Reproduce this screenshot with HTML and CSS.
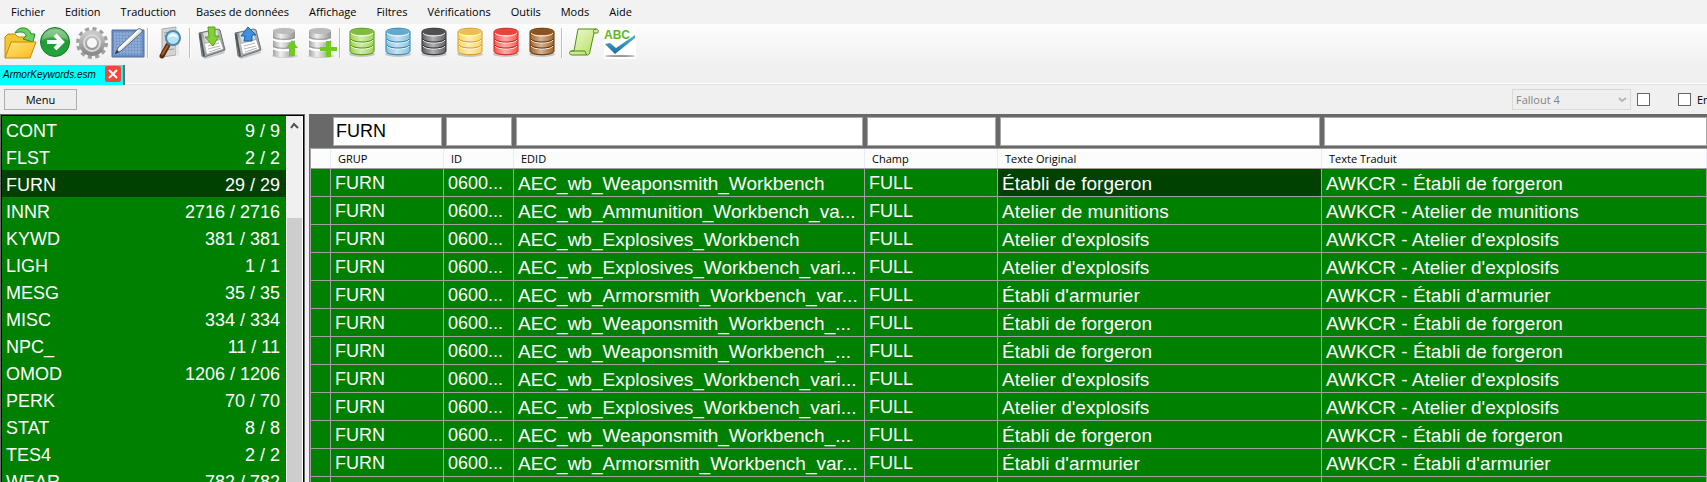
FILE: index.html
```html
<!DOCTYPE html>
<html lang="fr">
  <head>
    <meta charset="UTF-8" />
    <meta name="viewport" content="width=device-width, initial-scale=1.0" />
    <title>ArmorKeywords.esm</title>
    <link rel="stylesheet" href="styles.css">
  </head>
  <body>
    <nav class="menubar">
      <button type="button">Fichier</button>
      <button type="button">Edition</button>
      <button type="button">Traduction</button>
      <button type="button">Bases de données</button>
      <button type="button">Affichage</button>
      <button type="button">Filtres</button>
      <button type="button">Vérifications</button>
      <button type="button">Outils</button>
      <button type="button">Mods</button>
      <button type="button">Aide</button>
    </nav>

    <!-- shared gradients and the database cylinder -->
    <svg class="defs" aria-hidden="true">
      <defs>
        <linearGradient id="folder" x1="0" y1="0" x2="1" y2="1">
          <stop offset="0" stop-color="#ffe680" /><stop offset="1" stop-color="#fbb917" />
        </linearGradient>
        <linearGradient id="go" x1="0" y1="0" x2="0" y2="1">
          <stop offset="0" stop-color="#7cc47c" /><stop offset=".5" stop-color="#219a35" /><stop offset="1" stop-color="#1fa83a" />
        </linearGradient>
        <linearGradient id="metal" x1="0" y1="0" x2="0" y2="1">
          <stop offset="0" stop-color="#c8c8c8" /><stop offset="1" stop-color="#8c8c8c" />
        </linearGradient>
        <linearGradient id="silver" x1="0" y1="0" x2="1" y2="0">
          <stop offset="0" stop-color="#a4a4a4" /><stop offset=".35" stop-color="#f0f0f0" /><stop offset="1" stop-color="#949494" />
        </linearGradient>
        <linearGradient id="disk" x1="0" y1="0" x2="1" y2="1">
          <stop offset="0" stop-color="#6c7072" /><stop offset=".3" stop-color="#c0c3c5" /><stop offset="1" stop-color="#85898b" />
        </linearGradient>
        <linearGradient id="leaf" x1="0" y1="0" x2="1" y2="1">
          <stop offset="0" stop-color="#f0fbd8" /><stop offset="1" stop-color="#b4dc5c" />
        </linearGradient>
        <linearGradient id="tick" x1="0" y1="0" x2="0" y2="1">
          <stop offset="0" stop-color="#58b4dc" /><stop offset="1" stop-color="#1c6c9c" />
        </linearGradient>
        <linearGradient id="shine" x1="0" y1="0" x2="1" y2="0">
          <stop offset="0" stop-color="#fff" stop-opacity="0" /><stop offset=".45" stop-color="#fff" stop-opacity=".5" /><stop offset="1" stop-color="#fff" stop-opacity="0" />
        </linearGradient>
      </defs>
      <symbol id="db" viewBox="0 0 32 32">
        <ellipse cx="17" cy="27" rx="13" ry="3" fill="#000" opacity=".18" />
        <path d="M5 5c0-5 24-5 24 0v19c0 5-24 5-24 0z" fill="currentColor" />
        <path d="M6 8h22v16c0 4-22 4-22 0z" fill="url(#shine)" />
        <path d="M5 5c0-5 24-5 24 0v19c0 5-24 5-24 0z" fill="none" stroke="var(--edge)" />
        <ellipse cx="17" cy="5" rx="11" ry="3" fill="var(--edge)" opacity=".4" />
        <path d="M6 6c2 4 20 4 22 0M6 13c2 4 20 4 22 0M6 19c2 4 20 4 22 0" fill="none" stroke="#fff" opacity=".85" />
        <path d="M6 12c2 4 20 4 22 0M6 18c2 4 20 4 22 0" fill="none" stroke="var(--edge)" />
      </symbol>
      <symbol id="silver-db" viewBox="0 0 32 32">
        <ellipse cx="18" cy="29" rx="13" ry="2" fill="#000" opacity=".15" />
        <path d="M6 4c0-4 22-4 22 0v24c0 3-22 3-22 0z" fill="url(#silver)" />
        <ellipse cx="17" cy="4" rx="11" ry="3" fill="#bcbcbc" />
        <path d="M6 12c3 3 19 3 22 0M6 21c3 3 19 3 22 0" fill="none" stroke="#fff" stroke-width="2" />
        <path d="M6 10c3 3 19 3 22 0M6 19c3 3 19 3 22 0" fill="none" stroke="#929292" />
      </symbol>
      <symbol id="floppy" viewBox="0 0 32 32">
        <path d="M8 30l21-6 1 2-20 6z" fill="#000" opacity=".18" />
        <path d="M4 6l19-4 2 1 5 20-21 7-2-1z" fill="url(#disk)" stroke="#6d7173" />
        <path d="M5 7l4 22" stroke="#515557" stroke-width="2" />
        <path d="M8 6l14-3 2 9-13 3z" fill="#dcdfe1" />
        <path d="M10 17l15-4 3 9-16 5z" fill="#fff" />
        <path d="M13 19l11-3M13 22l12-3M14 25l12-4" stroke="#b4b4b4" />
      </symbol>
    </svg>

    <div class="toolbar">
      <button type="button" aria-label="Ouvrir">
        <svg viewBox="0 0 32 32">
          <path d="M2 30V10l3-3h7l3 3h12v18z" fill="#f6c632" stroke="#c58a00" />
          <path d="M12 6C15-1 26-1 28 7h4l-2 8-10-3 3-3c0-4-6-5-11-3z" fill="#6fce62" stroke="#258a31" />
          <path d="M8 15h25l-6 16H2z" fill="url(#folder)" stroke="#c58a00" />
        </svg>
      </button>
      <button type="button" aria-label="Lancer">
        <svg viewBox="0 0 32 32">
          <circle cx="16" cy="15" r="14.500" fill="url(#go)" stroke="#157a28" />
          <path d="M3 13C4-1 28-1 29 13c-8-4-18-4-26 0z" fill="#fff" opacity=".25" />
          <path d="M8 15h14M16 8l7 7-7 7" fill="none" stroke="#fff" stroke-width="4" />
        </svg>
      </button>
      <button type="button" aria-label="Options">
        <svg viewBox="0 0 32 32">
          <circle cx="17" cy="16" r="14" fill="none" stroke="#a0a0a0" stroke-width="4" stroke-dasharray="4 3.330" />
          <circle cx="17" cy="16" r="9" fill="none" stroke="url(#metal)" stroke-width="8" />
          <circle cx="17" cy="16" r="8" fill="none" stroke="#d8d8d8" stroke-width="2" />
        </svg>
      </button>
      <button type="button" aria-label="Dessin">
        <svg viewBox="0 0 32 32">
          <path d="M1 3h32v27H1z" fill="#6a8dc2" />
          <path d="M4 5v23M7 5v23M10 5v23M13 5v23M16 5v23M19 5v23M22 5v23M25 5v23M28 5v23M3 7h28M3 10h28M3 13h28M3 16h28M3 19h28M3 22h28M3 25h28" stroke="#98b4dc" fill="none" />
          <path d="M1 3h32v27H1z" fill="none" stroke="#4c6ea4" />
          <path d="M4 27l3-6L27 2c2-1 5 1 4 3L10 24z" fill="#dfe6ea" stroke="#53646e" />
          <path d="M8 22L28 3" stroke="#fff" stroke-width="2" />
          <path d="M4 27l2-4 2 2z" fill="#234" />
        </svg>
      </button>
      <span class="separator"></span>
      <button type="button" aria-label="Rechercher">
        <svg viewBox="0 0 32 32">
          <path d="M9 2l14-2v28l-14 2z" fill="#d2d4d6" stroke="#a9abad" />
          <path d="M23 1l3 3v25l-3-1z" fill="#e6e7e8" />
          <path d="M11 6l8-1M11 9l8-1M11 23l10-1" stroke="#999" />
          <path d="M15 18l-6 11" stroke="#5b2d10" stroke-width="5" stroke-linecap="round" />
          <path d="M15 18l-6 10" stroke="#a86030" stroke-width="2" />
          <circle cx="20" cy="11" r="7" fill="#b8e2f8" stroke="#4e87ab" stroke-width="2" />
          <path d="M15 11c1-6 9-6 10 0-3-2-7-2-10 0z" fill="#fff" opacity=".8" />
        </svg>
      </button>
      <span class="separator"></span>
      <button type="button" aria-label="Importer">
        <svg viewBox="0 0 32 32">
          <use href="#floppy" />
          <path d="M13 0h7v9h4l-6 10-8-9h4z" fill="#84cf35" stroke="#56a018" />
        </svg>
      </button>
      <button type="button" aria-label="Exporter">
        <svg viewBox="0 0 32 32">
          <use href="#floppy" />
          <path d="M13 14h8V8h4l-8-8-7 9h4z" fill="#3e91e0" stroke="#1761ad" />
        </svg>
      </button>
      <button type="button" aria-label="Charger la base">
        <svg viewBox="0 0 32 32">
          <use href="#silver-db" />
          <path d="M22 29V21h-3l6-8 6 8h-3v8z" fill="#6fcb21" />
        </svg>
      </button>
      <button type="button" aria-label="Ajouter à la base">
        <svg viewBox="0 0 32 32">
          <use href="#silver-db" />
          <path d="M23 14h5v6h6v4h-6v6h-5v-6h-6v-4h6z" fill="#6fcb21" />
        </svg>
      </button>
      <span class="separator"></span>
      <button type="button" class="db-green" aria-label="Base verte"><svg><use href="#db" /></svg></button>
      <button type="button" class="db-blue" aria-label="Base bleue"><svg><use href="#db" /></svg></button>
      <button type="button" class="db-black" aria-label="Base noire"><svg><use href="#db" /></svg></button>
      <button type="button" class="db-yellow" aria-label="Base jaune"><svg><use href="#db" /></svg></button>
      <button type="button" class="db-red" aria-label="Base rouge"><svg><use href="#db" /></svg></button>
      <button type="button" class="db-brown" aria-label="Base marron"><svg><use href="#db" /></svg></button>
      <span class="separator"></span>
      <button type="button" aria-label="Script">
        <svg viewBox="0 0 32 32">
          <path d="M11 2h18c3 0 3 4 1 4h-3l-4 18c0 4-2 4-4 4H5c-3 0-3-4-1-4h3z" fill="url(#leaf)" stroke="#4c8c10" />
          <path d="M27 6c-1-1-1-4 2-4M4 24h14c1 0 0 3 2 4" fill="none" stroke="#4c8c10" />
        </svg>
      </button>
      <button type="button" aria-label="Orthographe">
        <svg viewBox="0 0 32 32">
          <path d="M1 0h32v32H1z" fill="#fff" />
          <ellipse cx="17" cy="29" rx="15" ry="1" fill="#999" />
          <text x="1" y="12" class="abc">ABC</text>
          <path d="M2 17l5-1 6 5L32 8v3L12 27z" fill="url(#tick)" />
        </svg>
      </button>
    </div>

    <div class="tabs">
      <div class="tab">
        <span>ArmorKeywords.esm</span>
        <button type="button" aria-label="Fermer">
          <svg viewBox="0 0 16 16"><path d="M4 4l8 8M12 4l-8 8" stroke="#fff" stroke-width="2" /></svg>
        </button>
      </div>
    </div>

    <div class="options">
      <button type="button" class="menu-button">Menu</button>
      <div class="game">
        <select aria-label="Jeu" disabled>
          <option>Fallout 4</option>
        </select>
        <svg viewBox="0 0 9 8"><path d="M1 2l3 3 4-3" fill="none" stroke="#b4b4b4" stroke-width="2" /></svg>
      </div>
      <input type="checkbox" class="check-game" aria-label="Activer le jeu" />
      <label class="check-label"><input type="checkbox" /><span>En</span></label>
    </div>

    <main>
      <aside class="groups">
        <ul id="groups"></ul>
        <div class="scrollbar">
          <svg viewBox="0 0 9 7"><path d="M1 6l3-4 4 4" fill="none" stroke="#505050" stroke-width="2" /></svg>
          <div class="thumb"></div>
        </div>
      </aside>

      <section class="strings">
        <table>
          <colgroup>
            <col class="col-mark" />
            <col class="col-grup" />
            <col class="col-id" />
            <col class="col-edid" />
            <col class="col-champ" />
            <col class="col-original" />
            <col />
          </colgroup>
          <thead>
            <tr class="filters">
              <td></td>
              <td><input type="text" value="FURN" aria-label="Filtre GRUP" /></td>
              <td><input type="text" aria-label="Filtre ID" /></td>
              <td><input type="text" aria-label="Filtre EDID" /></td>
              <td><input type="text" aria-label="Filtre Champ" /></td>
              <td><input type="text" aria-label="Filtre Texte Original" /></td>
              <td><input type="text" aria-label="Filtre Texte Traduit" /></td>
            </tr>
            <tr class="titles">
              <th></th>
              <th>GRUP</th>
              <th>ID</th>
              <th>EDID</th>
              <th>Champ</th>
              <th>Texte Original</th>
              <th>Texte Traduit</th>
            </tr>
          </thead>
          <tbody id="rows"></tbody>
        </table>
      </section>
    </main>

    <script src="script.js"></script>
  </body>
</html>
```
FILE: styles.css
```css
* {
  box-sizing: border-box;
}
body {
  display: flex;
  flex-direction: column;
  height: 100vh;
  margin: 0;
  overflow: hidden;
  background: #f0f0f0;
  color: #000;
  font-family: "Open Sans", sans-serif;
  font-size: 11px;
}
button {
  padding: 0;
  border: none;
  background: none;
  color: inherit;
  font: inherit;
}
.defs {
  position: absolute;
  width: 0;
  height: 0;
}

/* menu bar */
.menubar {
  display: flex;
  flex: none;
  gap: 20px;
  height: 24px;
  padding: 0 0 2px 11px;
  background: #f2f2f2;
}

/* icon bar */
.toolbar {
  display: flex;
  flex: none;
  align-items: center;
  gap: 4px;
  height: 41px;
  padding: 0 3px 3px;
  background: linear-gradient(#fdfdfd, #f0f0f0);
}
.toolbar button,
.toolbar svg {
  display: block;
  width: 32px;
  height: 32px;
  overflow: visible;
}
.separator {
  width: 2px;
  height: 30px;
  border-left: 1px solid #bdbdbd;
  border-right: 1px solid #fff;
}
.db-green { color: #a4d65a; --edge: #4c9413; }
.db-blue { color: #8cc4e2; --edge: #2a80b4; }
.db-black { color: #66666a; --edge: #2c2c2e; }
.db-yellow { color: #ffd766; --edge: #d29a2c; }
.db-red { color: #ff5c50; --edge: #c8201c; }
.db-brown { color: #a8682c; --edge: #5c3408; }
.abc {
  fill: #62b81c;
  font: bold 12px "Liberation Sans", sans-serif;
}

/* file tabs */
.tabs {
  display: flex;
  flex: none;
  height: 20px;
  box-shadow: inset 0 -1px #e3e3e3, inset 0 -2px #fff;
}
.tab {
  display: flex;
  align-items: center;
  width: 125px;
  padding: 0 2px 2px 3px;
  border-right: 2px solid #696969;
  background: #0ff;
  font: italic 10px "Liberation Sans", Arial, sans-serif;
}
.tab span {
  flex: 1;
}
.tab button,
.tab svg {
  display: block;
  width: 16px;
  height: 16px;
}
.tab button {
  border-radius: 2px;
  background: #fb4438;
}

/* options strip */
.options {
  display: flex;
  flex: none;
  align-items: center;
  height: 29px;
  padding-left: 4px;
}
.menu-button {
  width: 73px;
  height: 21px;
  border: 1px solid #adadad;
  background: #eee;
}
.game {
  position: relative;
  margin-left: auto;
}
.game select {
  display: block;
  width: 119px;
  height: 21px;
  padding: 0 3px;
  appearance: none;
  border: 1px solid #d9d9d9;
  border-radius: 0;
  background: #efefef;
  color: #838383;
  font: inherit;
  opacity: 1;
}
.game svg {
  position: absolute;
  top: 7px;
  right: 4px;
  width: 9px;
  height: 8px;
}
.options input {
  flex: none;
  width: 13px;
  height: 13px;
  margin: 0;
  appearance: none;
  border: 1px solid #666;
  background: #fff;
}
.options .check-game {
  margin: 0 28px 0 6px;
}
.check-label {
  display: flex;
  align-items: center;
  gap: 6px;
  width: 29px;
  overflow: hidden;
}

main {
  display: flex;
  flex: 1;
  gap: 4px;
  min-height: 0;
  font-family: "Liberation Sans", Arial, sans-serif;
  font-size: 18px;
}

/* record groups */
.groups {
  display: flex;
  flex: none;
  width: 305px;
  padding: 1px 1px 0;
  border: 1px solid #696969;
  border-bottom: none;
  background: #000;
}
.groups ul {
  flex: 1;
  margin: 0;
  padding: 0;
  overflow: hidden;
  list-style: none;
  background: #008000;
  color: #fff;
}
.groups li {
  display: flex;
  justify-content: space-between;
  height: 27px;
  padding: 0 6px 0 4px;
  line-height: 30px;
}
.groups .selected {
  background: #004000;
}
.scrollbar {
  width: 17px;
  border: solid #fff;
  border-width: 0 1px;
  background: #f0f0f0;
}
.scrollbar svg {
  display: block;
  width: 9px;
  height: 7px;
  margin: 6px 3px 89px;
}
.thumb {
  height: 100%;
  background: #cdcdcd;
}

/* strings table */
.strings {
  flex: 1;
  min-width: 0;
  padding: 1px 0 0 1px;
  overflow: hidden;
  background: #696969;
}
table {
  width: 100%;
  border-spacing: 0;
  table-layout: fixed;
}
.col-mark { width: 21px; }
.col-grup { width: 113px; }
.col-id { width: 70px; }
.col-edid { width: 351px; }
.col-champ { width: 133px; }
.col-original { width: 324px; }
td,
th {
  padding: 0;
}
.filters td {
  height: 33px;
  padding: 0 2px;
}
.filters td:last-child {
  padding-right: 0;
}
.filters input {
  display: block;
  width: 100%;
  height: 29px;
  padding: 0 2px;
  border: 1px solid #a8a8a8;
  background: #fff;
  font: inherit;
}
.titles th {
  height: 21px;
  padding: 0 0 0 7px;
  border: solid #a0a0a0;
  border-width: 1px 0;
  background: #fcfcfc;
  box-shadow: inset -1px 0 #e4ecf7;
  font: 11px "Open Sans", sans-serif;
  text-align: left;
}
tbody td {
  height: 28px;
  padding: 2px 4px 0;
  overflow: hidden;
  border: solid #a0a0a0;
  border-width: 0 1px 1px 0;
  background: #008000;
  color: #fff;
  line-height: 25px;
  white-space: nowrap;
}
tbody .text {
  font-size: 19px;
}
tbody td:first-child,
.titles th:first-child {
  border-left: 1px solid #a0a0a0;
}
tbody .selected {
  background: #004000;
}
```
FILE: script.js
```js
const groups = [
  ["CONT", 9], ["FLST", 2], ["FURN", 29], ["INNR", 2716], ["KYWD", 381],
  ["LIGH", 1], ["MESG", 35], ["MISC", 334], ["NPC_", 11], ["OMOD", 1206],
  ["PERK", 70], ["STAT", 8], ["TES4", 2], ["WEAR", 782],
];

const strings = [
  ["AEC_wb_Weaponsmith_Workbench", "Établi de forgeron"],
  ["AEC_wb_Ammunition_Workbench_va...", "Atelier de munitions"],
  ["AEC_wb_Explosives_Workbench", "Atelier d'explosifs"],
  ["AEC_wb_Explosives_Workbench_vari...", "Atelier d'explosifs"],
  ["AEC_wb_Armorsmith_Workbench_var...", "Établi d'armurier"],
  ["AEC_wb_Weaponsmith_Workbench_...", "Établi de forgeron"],
  ["AEC_wb_Weaponsmith_Workbench_...", "Établi de forgeron"],
  ["AEC_wb_Explosives_Workbench_vari...", "Atelier d'explosifs"],
  ["AEC_wb_Explosives_Workbench_vari...", "Atelier d'explosifs"],
  ["AEC_wb_Weaponsmith_Workbench_...", "Établi de forgeron"],
  ["AEC_wb_Armorsmith_Workbench_var...", "Établi d'armurier"],
  ["AEC_wb_Armorsmith_Workbench_var...", "Établi d'armurier"],
];

document.getElementById("groups").innerHTML = groups
  .map(([name, count]) => {
    const cls = name === "FURN" ? ' class="selected"' : "";
    return `<li${cls}><span>${name}</span><span>${count} / ${count}</span></li>`;
  })
  .join("");

document.getElementById("rows").innerHTML = strings
  .map(([edid, text], i) => {
    const cls = i === 0 ? "text selected" : "text";
    return `<tr>
      <td></td>
      <td>FURN</td>
      <td>0600...</td>
      <td class="text">${edid}</td>
      <td>FULL</td>
      <td class="${cls}">${text}</td>
      <td class="text">AWKCR - ${text}</td>
    </tr>`;
  })
  .join("");
```
